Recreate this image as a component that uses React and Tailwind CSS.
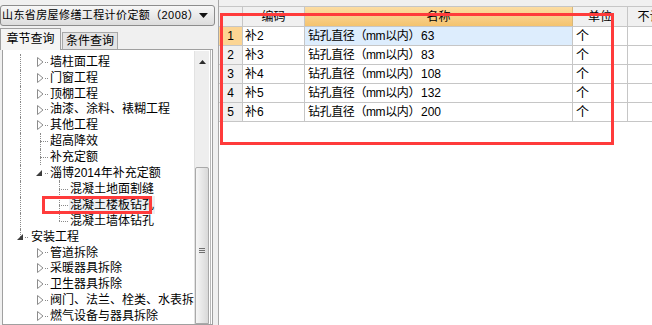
import React from "react";

const FONT = "font-['Liberation_Sans','Noto_Sans_CJK_SC',sans-serif]";

const tree = [
  { t: "墙柱面工程", lvl: 1, kind: "closed", trunk: true },
  { t: "门窗工程", lvl: 1, kind: "closed", trunk: true },
  { t: "顶棚工程", lvl: 1, kind: "closed", trunk: true },
  { t: "油漆、涂料、裱糊工程", lvl: 1, kind: "closed", trunk: true },
  { t: "其他工程", lvl: 1, kind: "closed", trunk: true },
  { t: "超高降效", lvl: 1, kind: "leaf", trunk: true },
  { t: "补充定额", lvl: 1, kind: "leaf", trunk: true },
  { t: "淄博2014年补充定额", lvl: 1, kind: "open", trunk: true },
  { t: "混凝土地面割缝", lvl: 2, kind: "leaf", trunk: true },
  { t: "混凝土楼板钻孔", lvl: 2, kind: "leaf", trunk: true, selected: true },
  { t: "混凝土墙体钻孔", lvl: 2, kind: "leaf", trunk: true, last: true },
  { t: "安装工程", lvl: 0, kind: "open", trunkEnd: true },
  { t: "管道拆除", lvl: 1, kind: "closed" },
  { t: "采暖器具拆除", lvl: 1, kind: "closed" },
  { t: "卫生器具拆除", lvl: 1, kind: "closed" },
  { t: "阀门、法兰、栓类、水表拆除", lvl: 1, kind: "closed" },
  { t: "燃气设备与器具拆除", lvl: 1, kind: "closed" },
];

const indent = { 0: "pl-[28px]", 1: "pl-[47px]", 2: "pl-[67px]" };

function Closed({ left }) {
  return (
    <svg className={`absolute top-[3px] ${left}`} width="7" height="10" viewBox="0 0 7 10">
      <polygon points="0.5,0.5 6,5 0.5,9.5" fill="white" stroke="#8c8c8c" strokeWidth="1" />
    </svg>
  );
}

function Open({ left }) {
  return (
    <svg className={`absolute top-[5px] ${left}`} width="6" height="6" viewBox="0 0 6 6">
      <polygon points="6,0 6,6 0,6" fill="#3c3c3c" />
    </svg>
  );
}

function TreeRow({ n }) {
  return (
    <div className={`relative h-[15.9px] flex items-center whitespace-nowrap ${indent[n.lvl]}`}>
      {n.trunk && (
        <span className="absolute left-[17px] top-0 h-full border-l border-dotted border-[#8a8a8a]" />
      )}
      {n.trunkEnd && (
        <span className="absolute left-[17px] top-0 h-1/2 border-l border-dotted border-[#8a8a8a]" />
      )}
      {n.lvl === 1 && n.kind === "closed" && (
        <>
          <Closed left="left-[34px]" />
          <span className="absolute left-[42px] top-1/2 w-[3px] border-t border-dotted border-[#8a8a8a]" />
        </>
      )}
      {n.lvl === 1 && n.kind === "open" && (
        <>
          <Open left="left-[33px]" />
          <span className="absolute left-[42px] top-1/2 w-[3px] border-t border-dotted border-[#8a8a8a]" />
          <span className="absolute left-[56px] top-[11px] h-[5px] border-l border-dotted border-[#8a8a8a]" />
        </>
      )}
      {n.lvl === 1 && n.kind === "leaf" && (
        <>
          <span className="absolute left-[37px] top-0 h-full border-l border-dotted border-[#8a8a8a]" />
          <span className="absolute left-[37px] top-1/2 w-[8px] border-t border-dotted border-[#8a8a8a]" />
        </>
      )}
      {n.lvl === 0 && (
        <>
          <Open left="left-[14px]" />
          <span className="absolute left-[22px] top-1/2 w-[3px] border-t border-dotted border-[#8a8a8a]" />
        </>
      )}
      {n.lvl === 2 && (
        <>
          <span
            className={`absolute left-[56px] top-0 border-l border-dotted border-[#8a8a8a] ${
              n.last ? "h-1/2" : "h-full"
            }`}
          />
          <span className="absolute left-[56px] top-1/2 w-[9px] border-t border-dotted border-[#8a8a8a]" />
        </>
      )}
      <span className={n.selected ? "bg-[#eceff3] px-[1px] -ml-[1px]" : ""}>{n.t}</span>
    </div>
  );
}

const rows = [
  ["补2", "63"],
  ["补3", "83"],
  ["补4", "108"],
  ["补5", "132"],
  ["补6", "200"],
];

export default function App() {
  return (
    <div className={`relative w-[652px] h-[325px] overflow-hidden flex bg-[#f0f0f0] text-[12px] text-black ${FONT}`}>
      {/* left side */}
      <div className="w-[215px] shrink-0 flex flex-col">
        <div className="mt-[5px] h-[21px] w-[215px] rounded-[3px] border border-[#8d8d8d] bg-gradient-to-b from-[#f7f7f7] to-[#dddddd] flex items-center pl-[1px] pr-[6px]">
          <span className="flex-1 text-[11px] whitespace-nowrap tracking-[0.4px]">山东省房屋修缮工程计价定额（2008）</span>
          <svg width="9" height="5" viewBox="0 0 9 5">
            <polygon points="0,0 9,0 4.5,5" fill="#111" />
          </svg>
        </div>

        <div className="mt-[1px] h-[22px] flex items-end">
          <div className="h-[22px] w-[61px] border border-b-0 border-[#a0a0a0] bg-[#f4f4f4] flex items-center justify-center relative z-10 -mb-[1px] pb-[1px]">
            章节查询
          </div>
          <div className="ml-[1px] h-[17px] w-[56px] border border-b-0 border-[#a8a8a8] bg-[#e4e4e4] flex items-center justify-center">
            条件查询
          </div>
        </div>

        <div className="relative ml-[2px] w-[211px] flex-1 border border-[#a0a0a0] bg-white flex">
          <div className="flex-1 min-w-0 overflow-hidden pt-[4px]">
            {tree.map((n) => (
              <TreeRow key={n.t} n={n} />
            ))}
          </div>
          <div className="w-[15px] shrink-0 mt-[1px] mr-[1px] flex flex-col bg-[#eeeeee] border-l border-[#e2e2e2]">
            <div className="h-[22px] flex items-center justify-center">
              <svg width="7" height="4" viewBox="0 0 7 4">
                <polygon points="3.5,0 7,4 0,4" fill="#2c2c2c" />
              </svg>
            </div>
            <div className="h-[94px]" />
            <div className="flex-1 rounded-t-[2px] border border-[#a9a9a9] bg-gradient-to-r from-[#f6f6f6] to-[#d9d9d9] flex flex-col items-center pt-[80px]">
              <span className="w-[6px] border-t border-[#6f6f6f]" />
              <span className="mt-[1px] w-[6px] border-t border-[#6f6f6f]" />
              <span className="mt-[1px] w-[6px] border-t border-[#6f6f6f]" />
            </div>
          </div>
          <div className="w-[2px] shrink-0 border-l border-[#b8b8b8]" />
        </div>
      </div>

      {/* right side */}
      <div className="flex-1 pl-[3px]">
        <div className="h-full border-l border-[#a8a8a8] bg-white flex flex-col">
          <div className="h-[6px] bg-[#f0f0f0]" />
          <div className="h-[21px] flex border-y border-[#c6c6c6] whitespace-nowrap">
            <div className="w-[24px] shrink-0 border-r border-[#c6c6c6] bg-[#f0f0f0]" />
            <div className="w-[62px] shrink-0 border-r border-[#c6c6c6] bg-[#f0f0f0] flex items-center justify-center">编码</div>
            <div className="w-[268px] shrink-0 border-r border-[#d9b878] bg-gradient-to-b from-[#fcdda3] to-[#f4c36e] flex items-center justify-center">名称</div>
            <div className="w-[55px] shrink-0 border-r border-[#c6c6c6] bg-[#f0f0f0] flex items-center justify-center">单位</div>
            <div className="w-[55px] shrink-0 bg-[#f0f0f0] flex items-center justify-center">不计价</div>
          </div>
          {rows.map(([code, num], i) => (
            <div key={code} className="h-[19px] flex border-b border-[#c6c6c6] whitespace-nowrap">
              <div
                className={`w-[24px] shrink-0 border-r border-[#c6c6c6] flex items-center justify-center ${
                  i === 0 ? "bg-[#fcd593]" : "bg-[#f0f0f0]"
                }`}
              >
                {i + 1}
              </div>
              <div className="w-[62px] shrink-0 border-r border-[#c6c6c6] flex items-center pl-[2px]">{code}</div>
              <div
                className={`w-[268px] shrink-0 border-r border-[#c6c6c6] flex items-center pl-[3px] ${
                  i === 0 ? "bg-[#ddedfd]" : ""
                }`}
              >
                <span className="inline-block w-[113px] overflow-visible tracking-[-0.4px]">钻孔直径（mm以内）</span>
                <span>{num}</span>
              </div>
              <div className="w-[55px] shrink-0 border-r border-[#c6c6c6] flex items-center pl-[3px] text-[13px]">个</div>
              <div className="w-[55px] shrink-0" />
            </div>
          ))}
        </div>
      </div>

      {/* annotation boxes */}
      <div className="absolute left-[220px] top-[13px] w-[394px] h-[132px] border-[3px] border-[#ff3b3b] pointer-events-none" />
      <div className="absolute left-[42px] top-[196px] w-[110px] h-[18px] border-[3px] border-[#ff3b3b] pointer-events-none" />
    </div>
  );
}
